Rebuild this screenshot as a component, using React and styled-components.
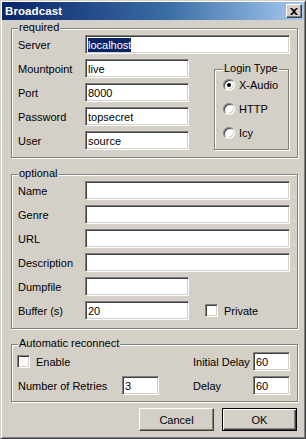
import React from 'react';
import styled, { createGlobalStyle } from 'styled-components';

const GlobalStyle = createGlobalStyle`
  html, body {
    margin: 0;
    padding: 0;
    background: #d4d0c8;
  }
  body {
    font-family: "Liberation Sans", Arial, sans-serif;
    font-size: 11px;
    color: #000;
  }
`;

const Window = styled.div`
  box-sizing: border-box;
  width: 306px;
  height: 439px;
  padding: 1px;
  background: #d4d0c8;
  border: 1px solid;
  border-color: #d4d0c8 #404040 #404040 #d4d0c8;
  box-shadow: inset 1px 1px 0 #fff, inset -1px -1px 0 #808080;
  display: flex;
  flex-direction: column;
`;

const TitleBar = styled.div`
  height: 18px;
  display: flex;
  align-items: center;
  justify-content: space-between;
  padding: 0 2px 0 3px;
  background: linear-gradient(90deg, #0a246a 0%, #3a6ea5 55%, #a6caf0 100%);
`;

const Title = styled.span`
  color: #fff;
  font-weight: bold;
  font-size: 11.5px;
  letter-spacing: 0.1px;
`;

const CloseButton = styled.div`
  box-sizing: border-box;
  width: 16px;
  height: 14px;
  display: flex;
  align-items: center;
  justify-content: center;
  background: #d4d0c8;
  border: 1px solid;
  border-color: #fff #404040 #404040 #fff;
  box-shadow: inset -1px -1px 0 #808080;
`;

const Content = styled.div`
  display: flex;
  flex-direction: column;
  padding: 0 6px 0 9px;
`;

const Group = styled.div`
  position: relative;
  box-sizing: border-box;
  border: 1px solid #808080;
  box-shadow: 1px 1px 0 #fff, inset 1px 1px 0 #fff;
  margin-top: ${(p) => p.$top}px;
  padding: ${(p) => p.$pad};
`;

const Legend = styled.span`
  position: absolute;
  top: -8px;
  left: ${(p) => p.$left || 6}px;
  padding: 0 1px;
  line-height: 13px;
  background: #d4d0c8;
`;

const FormGrid = styled.div`
  display: grid;
  grid-template-columns: 67px 104px 1fr;
  grid-auto-rows: 19px;
  row-gap: 5px;
`;

const Label = styled.label`
  display: flex;
  align-items: center;
  white-space: nowrap;
  grid-column: ${(p) => p.$col || 'auto'};
`;

const Field = styled.div`
  box-sizing: border-box;
  height: 19px;
  display: flex;
  align-items: center;
  padding-left: 2px;
  background: #fff;
  border: 1px solid;
  border-color: #808080 #fff #fff #808080;
  box-shadow: inset 1px 1px 0 #404040, inset -1px -1px 0 #d4d0c8;
  grid-column: ${(p) => p.$span || 'auto'};
  white-space: nowrap;
  overflow: hidden;
`;

const Selected = styled.span`
  background: #0a246a;
  color: #fff;
  padding: 1px 0;
`;

const LoginBox = styled.div`
  position: relative;
  box-sizing: border-box;
  grid-column: 3;
  grid-row: 2 / span 4;
  justify-self: end;
  width: 75px;
  height: 81px;
  margin: 10px 1px 0 0;
  border: 1px solid #808080;
  box-shadow: 1px 1px 0 #fff, inset 1px 1px 0 #fff;
  padding: 7px 0 0 8px;
  display: flex;
  flex-direction: column;
  gap: 8px;
`;

const Option = styled.div`
  height: 16px;
  display: flex;
  align-items: center;
  align-self: ${(p) => (p.$col ? 'center' : 'auto')};
  gap: 4px;
  margin-left: ${(p) => p.$indent || 0}px;
  grid-column: ${(p) => p.$col || 'auto'};
`;

const Radio = styled.span`
  position: relative;
  box-sizing: border-box;
  width: 12px;
  height: 12px;
  border-radius: 50%;
  background: #fff;
  border: 1px solid;
  border-color: #808080 #fff #fff #808080;
  box-shadow: inset 1px 1px 0 #404040, inset -1px -1px 0 #d4d0c8;

  &::after {
    content: '';
    display: ${(p) => (p.$checked ? 'block' : 'none')};
    position: absolute;
    left: 3px;
    top: 3px;
    width: 4px;
    height: 4px;
    border-radius: 50%;
    background: #000;
  }
`;

const Check = styled.span`
  box-sizing: border-box;
  width: 13px;
  height: 13px;
  margin-right: 2px;
  background: #fff;
  border: 1px solid;
  border-color: #808080 #fff #fff #808080;
  box-shadow: inset 1px 1px 0 #404040, inset -1px -1px 0 #d4d0c8;
`;

const ReconnectGrid = styled.div`
  display: grid;
  grid-template-columns: 104px 37px 1fr 60px 37px;
  grid-auto-rows: 19px;
  row-gap: 5px;
`;

const ButtonRow = styled.div`
  display: flex;
  justify-content: flex-end;
  gap: 8px;
  margin-top: 6px;
  padding-right: 1px;
`;

const Button = styled.div`
  box-sizing: border-box;
  width: 75px;
  height: 23px;
  display: flex;
  align-items: center;
  justify-content: center;
  background: #d4d0c8;
  border: 1px solid;
  border-color: ${(p) => (p.$default ? '#000' : '#fff #404040 #404040 #fff')};
  box-shadow: ${(p) =>
    p.$default
      ? 'inset 1px 1px 0 #fff, inset -1px -1px 0 #404040, inset -2px -2px 0 #808080'
      : 'inset -1px -1px 0 #808080'};
`;

const CloseIcon = () => (
  <svg width="8" height="7" viewBox="0 0 8 7">
    <path d="M0 0h2l2 2 2-2h2L5 3.5 8 7H6L4 5 2 7H0l3-3.5z" fill="#000" />
  </svg>
);

export default function App() {
  return (
    <>
      <GlobalStyle />
      <Window>
        <TitleBar>
          <Title>Broadcast</Title>
          <CloseButton>
            <CloseIcon />
          </CloseButton>
        </TitleBar>
        <Content>
          <Group $top={8} $pad="6px 7px 7px 6px">
            <Legend>required</Legend>
            <FormGrid>
              <Label>Server</Label>
              <Field $span="2 / span 2">
                <Selected>localhost</Selected>
              </Field>
              <Label $col="1">Mountpoint</Label>
              <Field $span="2">live</Field>
              <LoginBox>
                <Legend $left={8}>Login Type</Legend>
                <Option>
                  <Radio $checked />
                  X-Audio
                </Option>
                <Option>
                  <Radio />
                  HTTP
                </Option>
                <Option>
                  <Radio />
                  Icy
                </Option>
              </LoginBox>
              <Label $col="1">Port</Label>
              <Field $span="2">8000</Field>
              <Label $col="1">Password</Label>
              <Field $span="2">topsecret</Field>
              <Label $col="1">User</Label>
              <Field $span="2">source</Field>
            </FormGrid>
          </Group>

          <Group $top={16} $pad="6px 7px 8px 6px">
            <Legend>optional</Legend>
            <FormGrid>
              <Label>Name</Label>
              <Field $span="2 / span 2" />
              <Label>Genre</Label>
              <Field $span="2 / span 2" />
              <Label>URL</Label>
              <Field $span="2 / span 2" />
              <Label>Description</Label>
              <Field $span="2 / span 2" />
              <Label>Dumpfile</Label>
              <Field $span="2" />
              <Label $col="1">Buffer (s)</Label>
              <Field $span="2">20</Field>
              <Option $col="3" $indent={16}>
                <Check />
                Private
              </Option>
            </FormGrid>
          </Group>

          <Group $top={15} $pad="7px 7px 6px 6px">
            <Legend>Automatic reconnect</Legend>
            <ReconnectGrid>
              <Option $col="1 / span 2" $indent={-1}>
                <Check />
                Enable
              </Option>
              <Label $col="4">Initial Delay</Label>
              <Field $span="5">60</Field>
              <Label $col="1">Number of Retries</Label>
              <Field $span="2">3</Field>
              <Label $col="4">Delay</Label>
              <Field $span="5">60</Field>
            </ReconnectGrid>
          </Group>

          <ButtonRow>
            <Button>Cancel</Button>
            <Button $default>OK</Button>
          </ButtonRow>
        </Content>
      </Window>
    </>
  );
}
